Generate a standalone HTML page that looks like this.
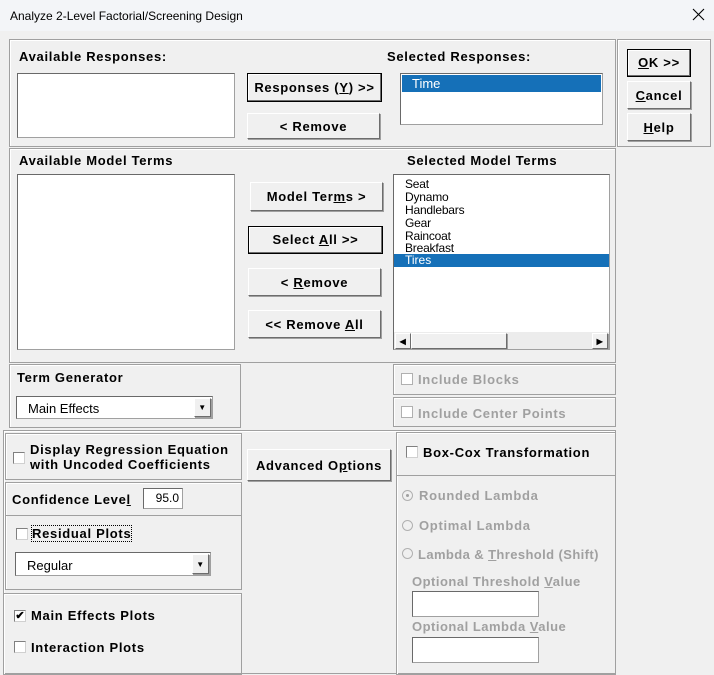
<!DOCTYPE html>
<html><head><meta charset="utf-8"><style>
*{box-sizing:border-box;margin:0;padding:0}
body{width:714px;height:675px;background:#f0f0f0;position:relative;overflow:hidden;font-family:"Liberation Sans",Arial,sans-serif;font-size:13px;font-weight:bold;color:#000;letter-spacing:0.7px}
div,span{position:absolute}
.title{left:0;top:0;width:714px;height:31px;background:#f3f5f8;font-weight:normal;font-size:12px;letter-spacing:0}
.fr{border:1px solid #a0a0a0;box-shadow:inset 1px 1px 0 #fff}
.lb{background:#fff;border:1px solid #a0a0a0;border-top-color:#696969;border-left-color:#696969}
.bt{background:#f0f0f0;border:1px solid #fff;border-right-color:#6d6d6d;border-bottom-color:#6d6d6d;box-shadow:1px 1px 0 #a0a0a0;text-align:center;white-space:nowrap}
.dk{border:1px solid #000;box-shadow:inset -1px -1px 0 #6d6d6d, inset 1px 1px 0 #fff}
.cb{width:12px;height:12px;background:#fff;border:1px solid #808080;border-right-color:#d0d0d0;border-bottom-color:#d0d0d0}
.it{font-weight:normal;font-size:12px;left:11px;white-space:nowrap;letter-spacing:-0.2px}
.sel{background:#1570b8;color:#fff;letter-spacing:0}
.g{color:#a0a0a0}
u{text-decoration:underline}
.rd{width:11px;height:11px;border-radius:50%;border:1px solid #b0b0b0;background:#f0f0f0}
.n{font-weight:normal;letter-spacing:0}
</style></head><body>
<div class="title"><span style="left:10px;top:9px">Analyze 2-Level Factorial/Screening Design</span>
<svg style="position:absolute;left:692px;top:8px" width="13" height="13" viewBox="0 0 13 13"><path d="M1 1L12 12M12 1L1 12" stroke="#000" stroke-width="1.1"/></svg></div>

<div class="fr" style="left:9px;top:39px;width:607px;height:108px"></div>
<div class="fr" style="left:617px;top:39px;width:94px;height:108px"></div>
<span style="left:19px;top:49px">Available Responses:</span>
<div class="lb" style="left:17px;top:73px;width:218px;height:65px"></div>
<div class="bt dk" style="left:247px;top:73px;width:135px;height:29px;line-height:27px">Responses (<u>Y</u>) &gt;&gt;</div>
<div class="bt" style="left:247px;top:113px;width:133px;height:26px;line-height:25px">&lt; Remove</div>
<span style="left:387px;top:49px">Selected Responses:</span>
<div class="lb" style="left:400px;top:73px;width:203px;height:52px"><div class="sel" style="left:1px;top:1px;width:199px;height:17px;font-weight:normal;font-size:13px;padding-left:10px;line-height:17px">Time</div></div>
<div class="bt dk" style="left:627px;top:49px;width:64px;height:28px;line-height:26px"><u>O</u>K &gt;&gt;</div>
<div class="bt" style="left:627px;top:81px;width:64px;height:28px;line-height:27px"><u>C</u>ancel</div>
<div class="bt" style="left:627px;top:113px;width:64px;height:28px;line-height:27px"><u>H</u>elp</div>

<div class="fr" style="left:9px;top:148px;width:607px;height:215px"></div>
<span style="left:19px;top:153px">Available Model Terms</span>
<div class="lb" style="left:17px;top:174px;width:218px;height:176px"></div>
<div class="bt" style="left:250px;top:182px;width:133px;height:29px;line-height:28px">Model Ter<u>m</u>s &gt;</div>
<div class="bt dk" style="left:248px;top:226px;width:135px;height:28px;line-height:26px">Select <u>A</u>ll &gt;&gt;</div>
<div class="bt" style="left:248px;top:268px;width:133px;height:28px;line-height:27px">&lt; <u>R</u>emove</div>
<div class="bt" style="left:248px;top:310px;width:133px;height:28px;line-height:27px">&lt;&lt; Remove <u>A</u>ll</div>
<span style="left:407px;top:153px">Selected Model Terms</span>
<div class="lb" style="left:393px;top:174px;width:217px;height:176px">
<span class="it" style="top:2px">Seat</span>
<span class="it" style="top:15px">Dynamo</span>
<span class="it" style="top:28px">Handlebars</span>
<span class="it" style="top:41px">Gear</span>
<span class="it" style="top:54px">Raincoat</span>
<span class="it" style="top:66px">Breakfast</span>
<div class="sel" style="left:0;top:79px;width:215px;height:13px;font-weight:normal;font-size:12px;padding-left:11px;line-height:13px">Tires</div>
<div style="left:0;top:157px;width:215px;height:17px;background:#ececec"></div>
<div class="bt" style="left:1px;top:158px;width:16px;height:16px;font-size:8px;line-height:15px">◀</div>
<div class="bt" style="left:17px;top:158px;width:96px;height:16px"></div>
<div class="bt" style="left:198px;top:158px;width:16px;height:16px;font-size:8px;line-height:15px">▶</div>
</div>

<div class="fr" style="left:9px;top:364px;width:232px;height:64px"></div>
<span style="left:17px;top:370px">Term Generator</span>
<div class="lb" style="left:16px;top:396px;width:197px;height:23px"><span class="n" style="left:11px;top:4px">Main Effects</span><div class="bt" style="left:177px;top:1px;width:17px;height:19px;font-size:8px;line-height:18px">▼</div></div>
<div class="fr" style="left:393px;top:364px;width:223px;height:31px"></div>
<div class="fr" style="left:393px;top:397px;width:223px;height:30px"></div>
<div class="cb" style="left:401px;top:373px;border-color:#b0b0b0"></div><span class="g" style="left:418px;top:372px">Include Blocks</span>
<div class="cb" style="left:401px;top:406px;border-color:#b0b0b0"></div><span class="g" style="left:418px;top:406px">Include Center Points</span>

<div class="fr" style="left:3px;top:430px;width:613px;height:244px"></div>
<div class="fr" style="left:5px;top:433px;width:237px;height:47px"></div>
<div class="cb" style="left:13px;top:452px"></div>
<span style="left:30px;top:442px;line-height:15px">Display Regression Equation<br>with Uncoded Coefficients</span>
<div class="bt" style="left:247px;top:449px;width:144px;height:32px;line-height:31px">Advanced O<u>p</u>tions</div>
<div class="fr" style="left:5px;top:482px;width:237px;height:108px"></div>
<div style="left:5px;top:515px;width:237px;height:1px;background:#a0a0a0"></div>
<span style="left:12px;top:492px">Confidence Leve<u>l</u></span>
<div class="lb" style="left:143px;top:488px;width:40px;height:21px"><span class="n" style="right:3px;top:2px;font-size:12px">95.0</span></div>
<div class="cb" style="left:16px;top:528px"></div>
<span style="left:32px;top:526px;outline:1px dotted #000">Residual Plots</span>
<div class="lb" style="left:15px;top:552px;width:196px;height:24px"><span class="n" style="left:11px;top:5px">Regular</span><div class="bt" style="left:176px;top:1px;width:17px;height:20px;font-size:8px;line-height:19px">▼</div></div>
<div class="fr" style="left:3px;top:593px;width:239px;height:82px"></div>
<div class="cb" style="left:14px;top:610px;font-size:11px;line-height:10px;text-align:center;letter-spacing:0">✔</div>
<span style="left:31px;top:608px">Main Effects Plots</span>
<div class="cb" style="left:14px;top:641px"></div>
<span style="left:31px;top:640px">Interaction Plots</span>

<div class="fr" style="left:396px;top:432px;width:220px;height:243px"></div>
<div style="left:397px;top:475px;width:218px;height:1px;background:#a0a0a0"></div>
<div class="cb" style="left:406px;top:446px"></div>
<span style="left:423px;top:445px">Box-Cox Transformation</span>
<div class="rd" style="left:402px;top:490px"><div style="left:3px;top:3px;width:3px;height:3px;background:#a0a0a0;border-radius:50%"></div></div>
<span class="g" style="left:419px;top:488px">Rounded Lambda</span>
<div class="rd" style="left:402px;top:520px"></div>
<span class="g" style="left:419px;top:518px">Optimal Lambda</span>
<div class="rd" style="left:402px;top:548px"></div>
<span class="g" style="left:418px;top:547px;letter-spacing:0.4px">Lambda &amp; <u>T</u>hreshold (Shift)</span>
<span class="g" style="left:412px;top:574px;letter-spacing:0.5px">Optional Threshold <u>V</u>alue</span>
<div class="lb" style="left:412px;top:591px;width:127px;height:26px"></div>
<span class="g" style="left:412px;top:619px;letter-spacing:0.5px">Optional Lambda <u>V</u>alue</span>
<div class="lb" style="left:412px;top:637px;width:127px;height:26px"></div>
</body></html>
